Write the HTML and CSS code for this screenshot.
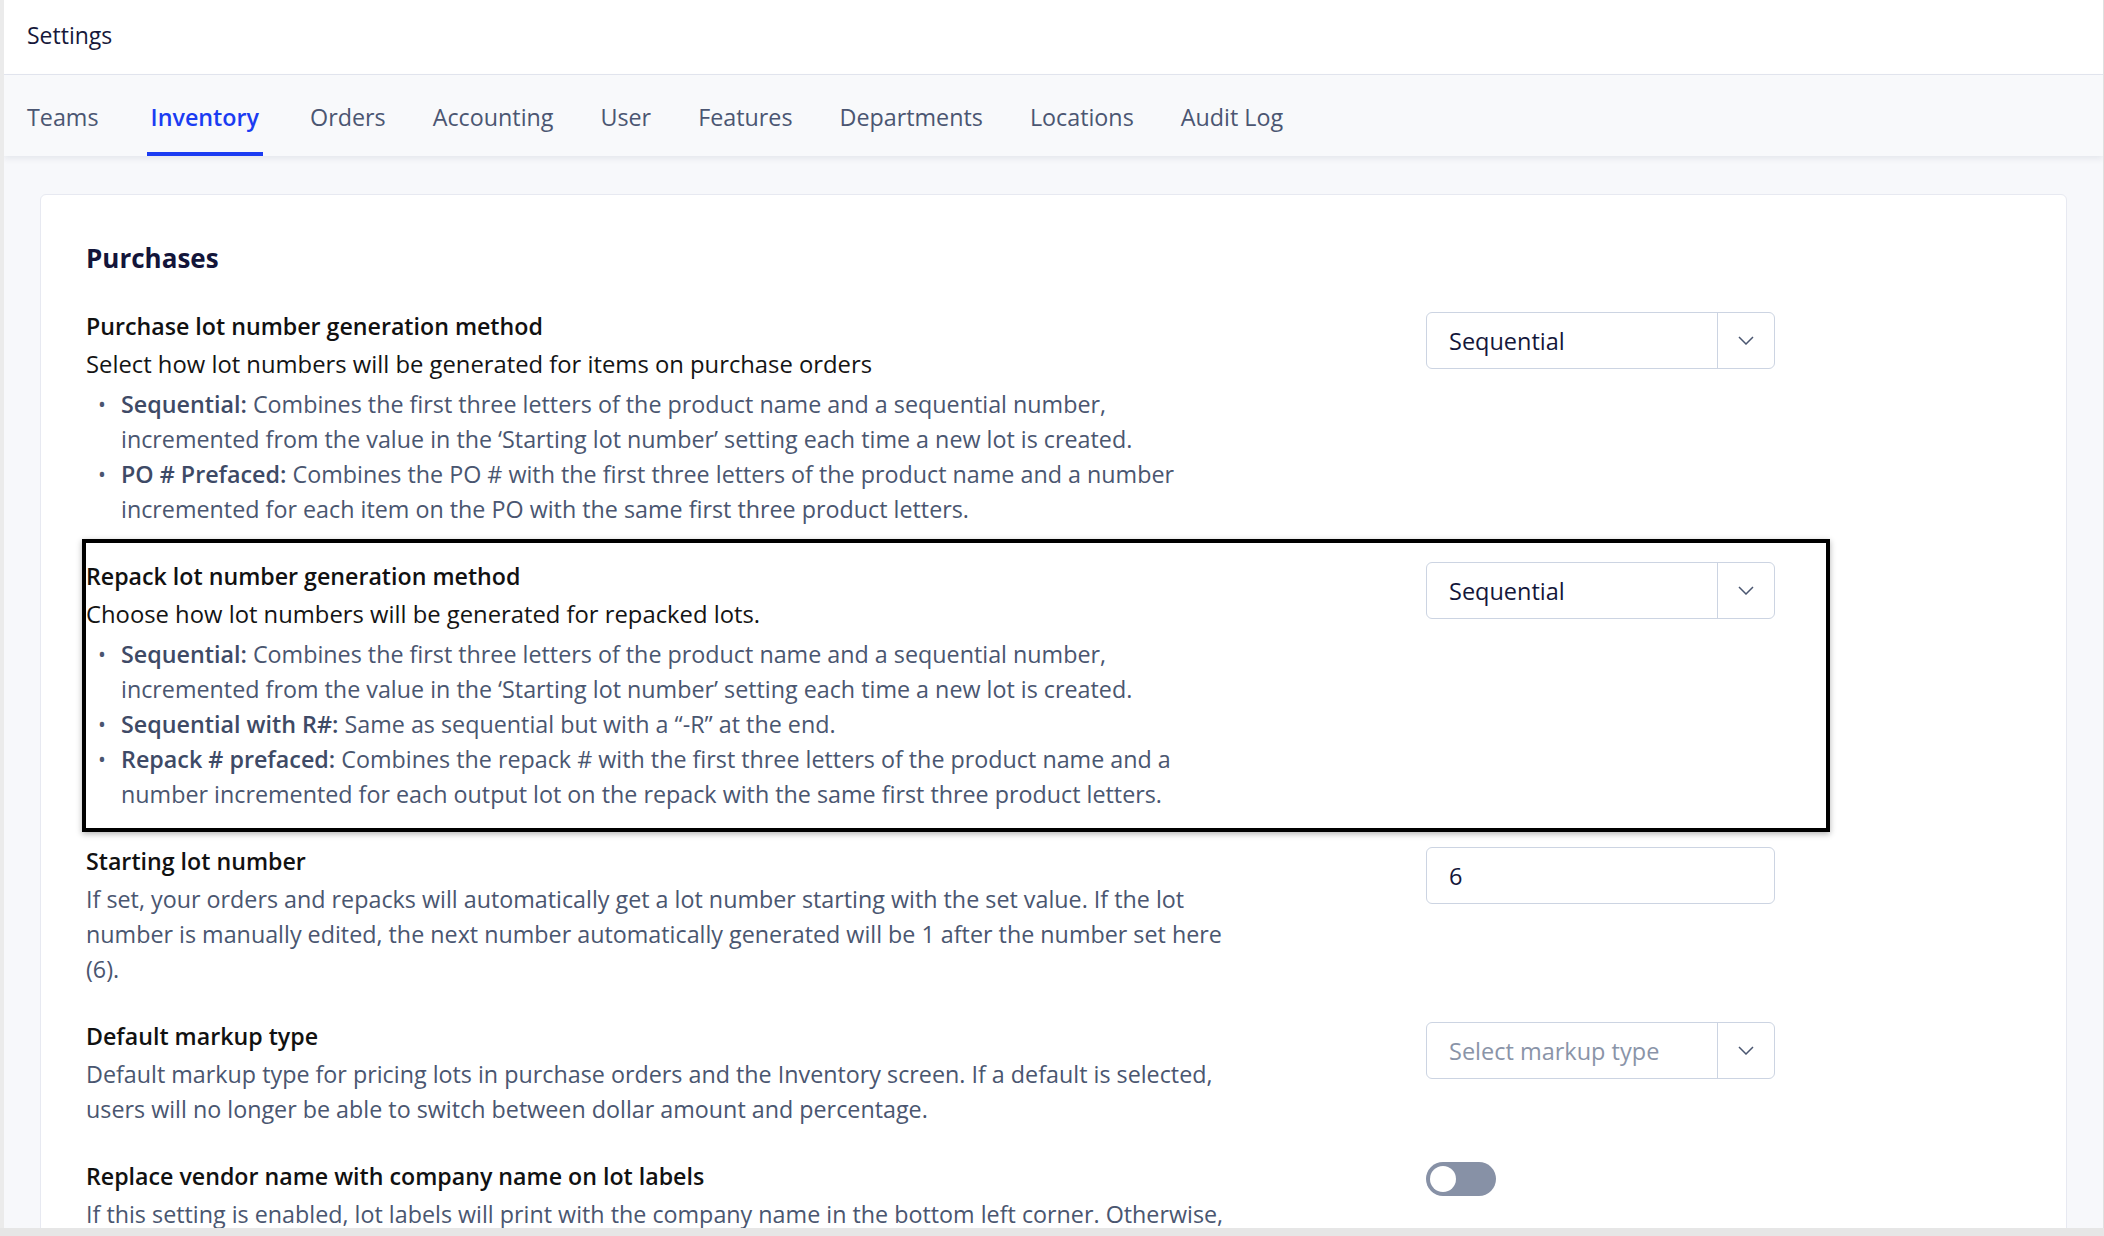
FILE: index.html
```html
<!DOCTYPE html>
<html lang="en">
<head>
    <meta charset="UTF-8">
    <meta name="viewport" content="width=device-width, initial-scale=1.0">
    <title>Settings</title>
    <link rel="stylesheet" href="styles.css">
</head>
<body>
    <div class="app">
        <header class="topbar">Settings</header>

        <nav class="tabs">
            <a class="tab" href="#">Teams</a>
            <a class="tab active" href="#">Inventory</a>
            <a class="tab" href="#">Orders</a>
            <a class="tab" href="#">Accounting</a>
            <a class="tab" href="#">User</a>
            <a class="tab" href="#">Features</a>
            <a class="tab" href="#">Departments</a>
            <a class="tab" href="#">Locations</a>
            <a class="tab" href="#">Audit Log</a>
        </nav>

        <main class="content">
            <section class="card">
                <h2>Purchases</h2>

                <div class="setting">
                    <div class="setting-text">
                        <h3>Purchase lot number generation method</h3>
                        <p class="lead">Select how lot numbers will be generated for items on purchase orders</p>
                        <ul class="options">
                            <li><b>Sequential:</b> Combines the first three letters of the product name and a sequential number, incremented from the value in the ‘Starting lot number’ setting each time a new lot is created.</li>
                            <li><b>PO # Prefaced:</b> Combines the PO # with the first three letters of the product name and a number incremented for each item on the PO with the same first three product letters.</li>
                        </ul>
                    </div>
                    <div class="setting-control">
                        <div class="select">
                            <span class="select-value">Sequential</span>
                            <span class="select-arrow">
                                <svg width="16" height="9" viewBox="0 0 16 9"><polyline points="1,1 8,8 15,1" fill="none" stroke="#4a5670" stroke-width="1.5"/></svg>
                            </span>
                        </div>
                    </div>
                </div>

                <div class="setting marked">
                    <div class="setting-text">
                        <h3>Repack lot number generation method</h3>
                        <p class="lead">Choose how lot numbers will be generated for repacked lots.</p>
                        <ul class="options">
                            <li><b>Sequential:</b> Combines the first three letters of the product name and a sequential number, incremented from the value in the ‘Starting lot number’ setting each time a new lot is created.</li>
                            <li><b>Sequential with R#:</b> Same as sequential but with a “-R” at the end.</li>
                            <li><b>Repack # prefaced:</b> Combines the repack # with the first three letters of the product name and a number incremented for each output lot on the repack with the same first three product letters.</li>
                        </ul>
                    </div>
                    <div class="setting-control">
                        <div class="select">
                            <span class="select-value">Sequential</span>
                            <span class="select-arrow">
                                <svg width="16" height="9" viewBox="0 0 16 9"><polyline points="1,1 8,8 15,1" fill="none" stroke="#4a5670" stroke-width="1.5"/></svg>
                            </span>
                        </div>
                    </div>
                </div>

                <div class="setting">
                    <div class="setting-text">
                        <h3>Starting lot number</h3>
                        <p class="hint">If set, your orders and repacks will automatically get a lot number starting with the set value. If the lot number is manually edited, the next number automatically generated will be 1 after the number set here (6).</p>
                    </div>
                    <div class="setting-control">
                        <div class="input">6</div>
                    </div>
                </div>

                <div class="setting">
                    <div class="setting-text">
                        <h3>Default markup type</h3>
                        <p class="hint">Default markup type for pricing lots in purchase orders and the Inventory screen. If a default is selected, users will no longer be able to switch between dollar amount and percentage.</p>
                    </div>
                    <div class="setting-control">
                        <div class="select">
                            <span class="select-value placeholder">Select markup type</span>
                            <span class="select-arrow">
                                <svg width="16" height="9" viewBox="0 0 16 9"><polyline points="1,1 8,8 15,1" fill="none" stroke="#4a5670" stroke-width="1.5"/></svg>
                            </span>
                        </div>
                    </div>
                </div>

                <div class="setting">
                    <div class="setting-text">
                        <h3>Replace vendor name with company name on lot labels</h3>
                        <p class="hint">If this setting is enabled, lot labels will print with the company name in the bottom left corner. Otherwise, the vendor name will be printed there instead.</p>
                    </div>
                    <div class="setting-control">
                        <span class="toggle"><span class="knob"></span></span>
                    </div>
                </div>
            </section>
        </main>
    </div>
</body>
</html>
```

FILE: styles.css
```css
body {
    margin: 0;
    padding: 0;
    background-color: #e6e6e6;
    font-family: "Open Sans", "Noto Sans", sans-serif;
    font-size: 23.5px;
    color: #111;
}
.app {
    height: 1228px;
    overflow: hidden;
    border-left: 4px solid #ebebeb;
    border-right: 1px solid #e0e0e0;
    background-color: #f7f8fb;
}

/* top bar */
.topbar {
    height: 75px;
    display: flex;
    align-items: center;
    padding: 0 0 4px 23px;
    box-sizing: border-box;
    background: white;
    border-bottom: 1px solid #e3e6ef;
    color: #16183a;
    font-size: 23px;
}

/* tabs */
.tabs {
    position: relative;
    height: 81px;
    display: flex;
    gap: 39px;
    padding-left: 19px;
    background-color: #f8f9fb;
    box-shadow: 0 3px 6px rgba(20, 30, 60, 0.07);
}
.tab {
    display: flex;
    align-items: center;
    padding: 6px 4px 0;
    border-bottom: 4px solid transparent;
    color: #4b5672;
    text-decoration: none;
    font-size: 23.3px;
}
.tab.active {
    margin: 0 4px 0 5px;
    color: #1b3cf2;
    font-weight: 600;
    border-bottom-color: #1b3cf2;
}

/* main area */
.content {
    padding: 38px 36px 0;
}
.card {
    background: white;
    border: 1px solid #e7e9f1;
    border-radius: 6px;
    padding: 46px 45px 40px;
}
.card h2 {
    margin: 0 0 17px;
    font-size: 26px;
    line-height: 35px;
    font-weight: 700;
    color: #13153a;
}

.setting {
    position: relative;
    max-width: 1740px;
    display: grid;
    grid-template-columns: 1154px 349px;
    column-gap: 186px;
    padding: 16px 0;
}
.setting.marked::after {
    content: "";
    position: absolute;
    inset: -4px;
    border: 4px solid #000;
    box-shadow: 0 2px 6px rgba(0, 0, 0, 0.3);
    pointer-events: none;
}
.setting h3 {
    margin: 0;
    font-size: 23.2px;
    line-height: 35px;
    font-weight: 600;
    color: #111;
}
.setting p {
    margin: 3px 0 0;
    line-height: 35px;
}
.setting .lead {
    font-size: 23.8px;
    color: #141414;
}
.setting .hint {
    font-size: 23.3px;
    color: #4a5670;
}
.options {
    list-style: none;
    margin: 5px 0 0;
    padding: 0 0 0 35px;
    color: #4a5670;
    font-size: 23.3px;
    line-height: 35px;
}
.options li {
    position: relative;
}
.options li::before {
    content: "•";
    position: absolute;
    left: -23px;
    font-size: 21px;
}
.options b {
    font-weight: 600;
    color: #3e4a66;
}

/* controls */
.setting-control {
    padding-top: 3px;
}
.select,
.input {
    height: 57px;
    box-sizing: border-box;
    border: 1.5px solid #ccd4e2;
    border-radius: 6px;
    background: white;
    display: flex;
    align-items: center;
    color: #14163a;
    font-size: 23.5px;
}
.input {
    padding-left: 22px;
}
.select-value {
    flex: 1;
    padding-left: 22px;
}
.select-value.placeholder {
    color: #8a94a8;
}
.select-arrow {
    width: 56px;
    height: 100%;
    border-left: 1.5px solid #ccd4e2;
    display: flex;
    align-items: center;
    justify-content: center;
}
.toggle {
    display: inline-block;
    position: relative;
    width: 70px;
    height: 34px;
    border-radius: 17px;
    background-color: #8791a6;
}
.toggle .knob {
    position: absolute;
    top: 4px;
    left: 4px;
    width: 26px;
    height: 26px;
    border-radius: 50%;
    background: white;
}
```
